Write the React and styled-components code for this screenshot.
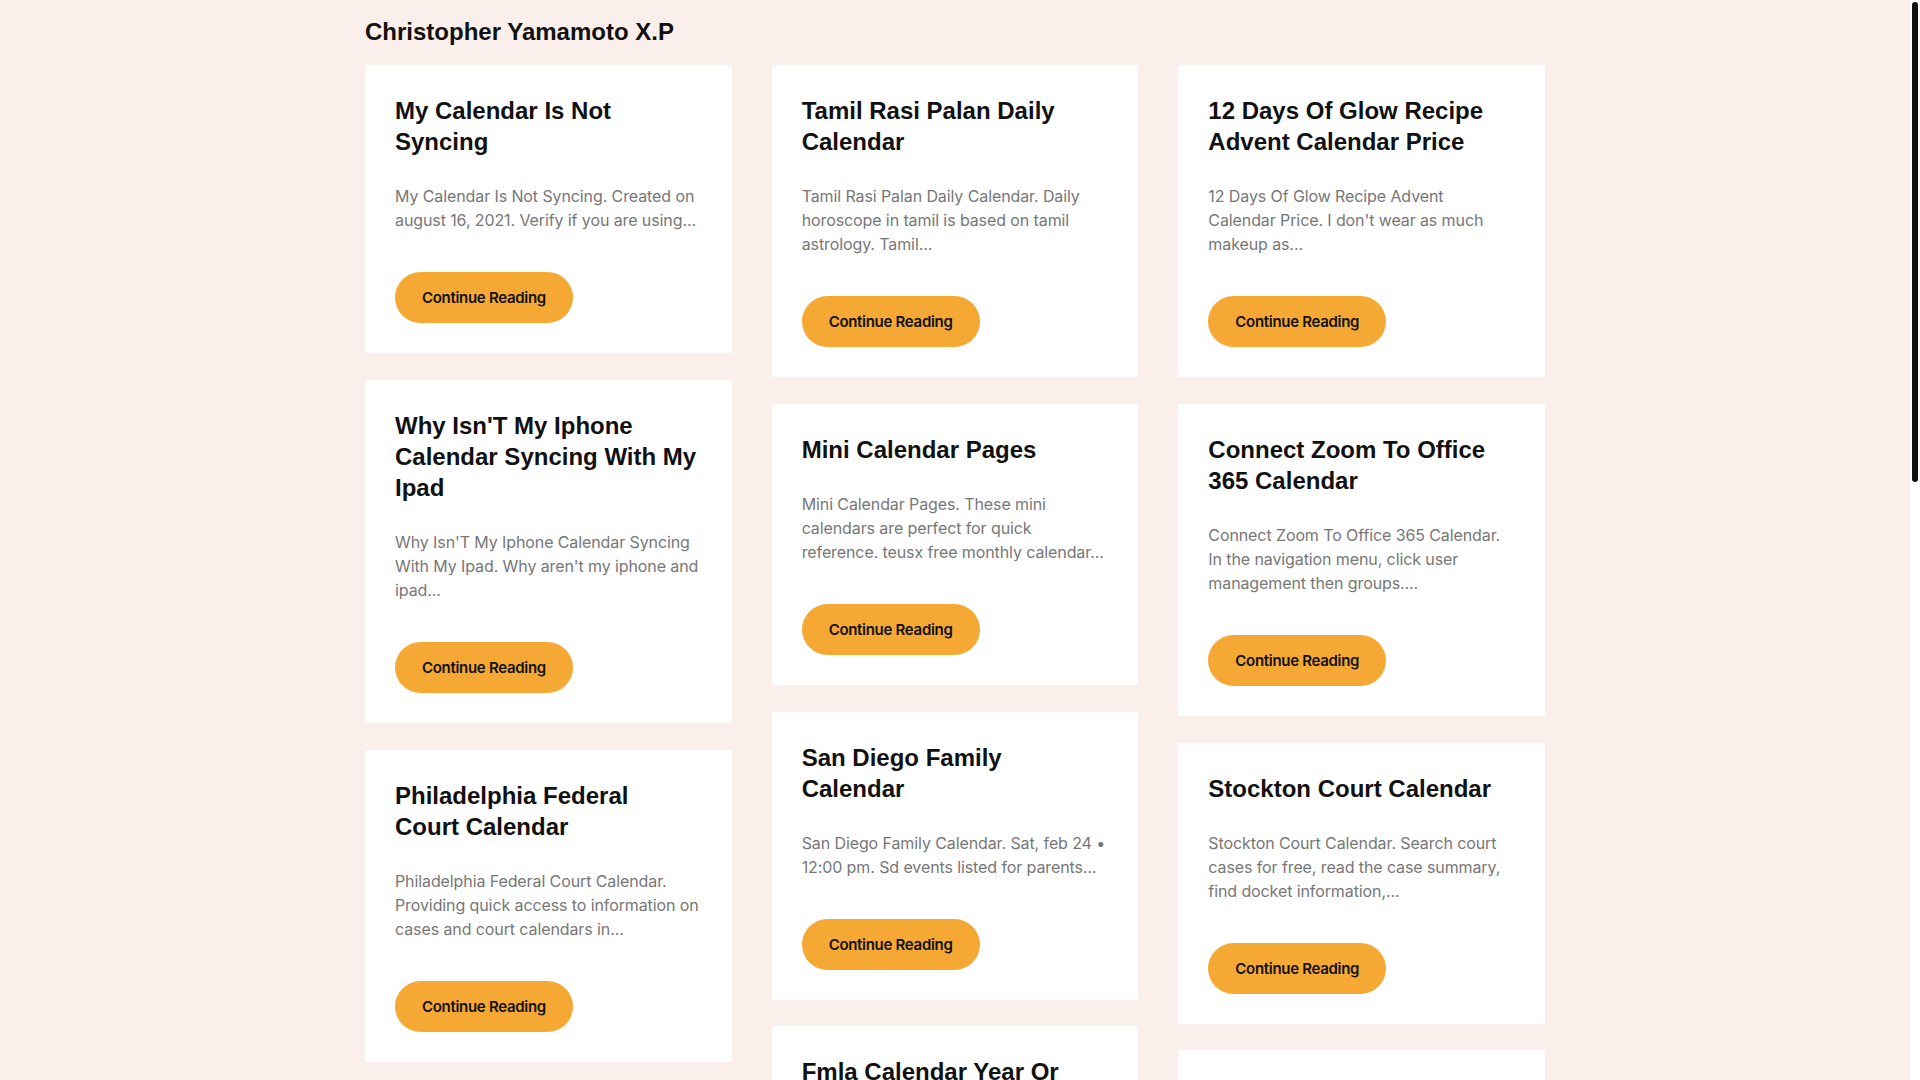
import styled, { createGlobalStyle } from "styled-components";

const GlobalStyle = createGlobalStyle`
  html {
    background: #faefea;
  }
  body {
    margin: 0;
    background: #faefea;
    font-family: Inter, "Noto Sans", sans-serif;
    color: #111;
  }
`;

const columns = [
  [
    {
      title: "My Calendar Is Not Syncing",
      text: "My Calendar Is Not Syncing. Created on august 16, 2021. Verify if you are using...",
    },
    {
      title: "Why Isn'T My Iphone Calendar Syncing With My Ipad",
      text: "Why Isn'T My Iphone Calendar Syncing With My Ipad. Why aren't my iphone and ipad...",
    },
    {
      title: "Philadelphia Federal Court Calendar",
      text: "Philadelphia Federal Court Calendar. Providing quick access to information on cases and court calendars in...",
    },
    {
      title: "Osu Academic Calendar Spring 2024",
      text: "Osu Academic Calendar Spring 2024. The academic calendar lists important dates for students...",
    },
    {
      title: "Lunar Calendar For Planting",
      text: "Lunar Calendar For Planting. Gardening by the moon is an old tradition that many...",
    },
    {
      title: "Printable Blank Calendar Template",
      text: "Printable Blank Calendar Template. Free blank calendar templates in word and pdf...",
    },
    {
      title: "Uconn Academic Calendar",
      text: "Uconn Academic Calendar. View the dates for the fall and spring semesters...",
    },
  ],
  [
    {
      title: "Tamil Rasi Palan Daily Calendar",
      text: "Tamil Rasi Palan Daily Calendar. Daily horoscope in tamil is based on tamil astrology. Tamil...",
    },
    {
      title: "Mini Calendar Pages",
      text: "Mini Calendar Pages. These mini calendars are perfect for quick reference. teusx free monthly calendar...",
    },
    {
      title: "San Diego Family Calendar",
      text: "San Diego Family Calendar. Sat, feb 24 • 12:00 pm. Sd events listed for parents...",
    },
    {
      title: "Fmla Calendar Year Or Rolling",
      text: "Fmla Calendar Year Or Rolling. Employers may choose any one of four methods...",
    },
    {
      title: "Nfl Calendar 2024",
      text: "Nfl Calendar 2024. Key dates for the upcoming season, from the draft to the...",
    },
    {
      title: "Google Calendar Color Codes",
      text: "Google Calendar Color Codes. Choose custom colors for your events and calendars...",
    },
    {
      title: "Desk Calendar Stand",
      text: "Desk Calendar Stand. A simple stand keeps your monthly calendar in view...",
    },
  ],
  [
    {
      title: "12 Days Of Glow Recipe Advent Calendar Price",
      text: "12 Days Of Glow Recipe Advent Calendar Price. I don't wear as much makeup as...",
    },
    {
      title: "Connect Zoom To Office 365 Calendar",
      text: "Connect Zoom To Office 365 Calendar. In the navigation menu, click user management then groups....",
    },
    {
      title: "Stockton Court Calendar",
      text: "Stockton Court Calendar. Search court cases for free, read the case summary, find docket information,...",
    },
    {
      title: "Ucsd Academic Calendar",
      text: "Ucsd Academic Calendar. Quarter dates, holidays and final exam weeks for...",
    },
    {
      title: "Moon Phase Calendar 2024",
      text: "Moon Phase Calendar 2024. See every new moon and full moon of the year...",
    },
    {
      title: "Shared Calendar Outlook",
      text: "Shared Calendar Outlook. Open a shared calendar from the navigation pane...",
    },
    {
      title: "Perpetual Calendar Formula",
      text: "Perpetual Calendar Formula. Work out the day of the week for any date...",
    },
  ],
];

export default function App() {
  return (
    <Shell>
      <GlobalStyle />
      <Page>
        <SiteTitle>Christopher Yamamoto X.P</SiteTitle>
        <Grid>
          {columns.map((col, i) => (
            <Column key={i}>
              {col.map((post) => (
                <Card key={post.title}>
                  <CardTitle>{post.title}</CardTitle>
                  <Excerpt>{post.text}</Excerpt>
                  <ReadButton>Continue Reading</ReadButton>
                </Card>
              ))}
            </Column>
          ))}
        </Grid>
      </Page>
      <ScrollTrack>
        <ScrollThumb />
      </ScrollTrack>
    </Shell>
  );
}

const Shell = styled.div`
  padding-right: 10px;
`;

const Page = styled.div`
  width: 1180px;
  margin: 0 auto;
  padding: 17px 0 60px;
`;

const SiteTitle = styled.h1`
  font-family: "Liberation Sans", Arial, sans-serif;
  font-weight: 700;
  font-size: 24px;
  line-height: 30px;
  margin: 0 0 18px;
  color: #111;
`;

const Grid = styled.div`
  display: grid;
  grid-template-columns: repeat(3, 1fr);
  column-gap: 40px;
  align-items: start;
`;

const Column = styled.div`
  display: flex;
  flex-direction: column;
  gap: 26.5px;
`;

const Card = styled.article`
  background: #fff;
  padding: 30px 33px 30px 30px;
  display: flex;
  flex-direction: column;
  align-items: flex-start;
`;

const CardTitle = styled.h2`
  font-family: "Liberation Sans", Arial, sans-serif;
  font-weight: 700;
  font-size: 24px;
  line-height: 1.3;
  margin: 0 0 27px;
  color: #111;
`;

const Excerpt = styled.p`
  font-family: Inter, sans-serif;
  font-size: 16px;
  line-height: 24px;
  letter-spacing: -0.1px;
  color: #777;
  margin: 0 0 40px;
`;

const ReadButton = styled.a`
  display: inline-flex;
  align-items: center;
  height: 51px;
  padding: 0 27px;
  border-radius: 26px;
  background: #f5a834;
  color: #111;
  font-family: Inter, sans-serif;
  font-weight: 600;
  font-size: 15px;
  letter-spacing: -0.3px;
  cursor: pointer;
`;

/* stand-in for the page's styled scrollbar, which the headless browser hides */
const ScrollTrack = styled.div`
  position: fixed;
  top: 0;
  right: 0;
  width: 10px;
  height: 100vh;
  background: #fff;
`;

const ScrollThumb = styled.div`
  margin: 2px 0 0 2px;
  width: 6px;
  height: 480px;
  border-radius: 3px;
  background: #111;
`;
